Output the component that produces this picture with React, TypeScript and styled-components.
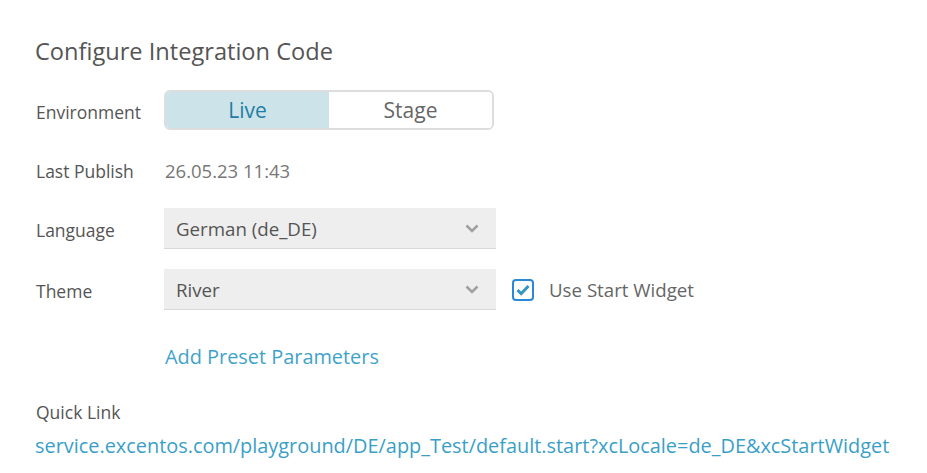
import styled, { createGlobalStyle } from "styled-components";

const GlobalStyle = createGlobalStyle`
  body {
    margin: 0;
    background: #ffffff;
    font-family: "Open Sans", "Liberation Sans", sans-serif;
  }
`;

const Panel = styled.div`
  padding: 36px 35px 0 35px;
  color: #555555;
`;

const Title = styled.h2`
  margin: 0 0 24px 0;
  font-size: 23.6px;
  font-weight: 400;
  color: #555555;
  line-height: 30px;
`;

const Form = styled.div`
  display: grid;
  grid-template-columns: 129px auto;
  row-gap: 20px;
  align-items: center;
`;

const Label = styled.div`
  font-size: 17.5px;
  color: #555555;
  padding: 3px 0 0 1px;
`;

const Toggle = styled.div`
  display: flex;
  width: 330px;
  height: 40px;
  box-sizing: border-box;
  border: 2px solid #dddddd;
  border-radius: 6px;
  overflow: hidden;
`;

const ToggleOption = styled.div<{ $active?: boolean }>`
  flex: 1;
  display: flex;
  align-items: center;
  justify-content: center;
  font-size: 21px;
  background: ${(p) => (p.$active ? "#cde3ea" : "#ffffff")};
  color: ${(p) => (p.$active ? "#1f7ea3" : "#666666")};
`;

const Value = styled.div`
  display: flex;
  align-items: center;
  height: 38px;
  box-sizing: border-box;
  padding: 3px 0 0 1px;
  font-size: 18.5px;
  color: #777777;
`;

const Row = styled.div`
  display: flex;
  align-items: center;
  gap: 16px;
`;

const Select = styled.div`
  display: flex;
  align-items: center;
  justify-content: space-between;
  width: 332px;
  height: 41px;
  box-sizing: border-box;
  padding: 0 17px 0 12px;
  background: #eeeeee;
  border-bottom: 1px solid #d8d8d8;
  font-size: 18.7px;
  color: #555555;
`;

const CheckLabel = styled.label`
  display: flex;
  align-items: center;
  gap: 15px;
  font-size: 18.7px;
  color: #666666;
`;

const CheckBox = styled.span`
  display: flex;
  align-items: center;
  justify-content: center;
  width: 22px;
  height: 22px;
  box-sizing: border-box;
  border: 2px solid #2a88d8;
  border-radius: 4px;
`;

const PresetLink = styled.a`
  grid-column: 2;
  padding-left: 1px;
  margin-top: 13px;
  font-size: 19.9px;
  color: #3fa3c9;
  text-decoration: none;
`;

const QuickLabel = styled.div`
  margin-top: 30px;
  font-size: 17.5px;
  color: #555555;
  padding-left: 1px;
`;

const QuickLink = styled.a`
  display: block;
  margin-top: 8px;
  font-size: 19.9px;
  color: #3a9fc7;
  text-decoration: none;
  white-space: nowrap;
`;

function Chevron() {
  return (
    <svg width="14" height="9" viewBox="0 0 14 9">
      <path d="M1.5 1.5 L7 7 L12.5 1.5" fill="none" stroke="#a0a0a0" strokeWidth="2.6" />
    </svg>
  );
}

function Check() {
  return (
    <svg width="14" height="12" viewBox="0 0 14 12">
      <path d="M1.5 6.2 L5.2 9.6 L12.5 2" fill="none" stroke="#3497c2" strokeWidth="3" />
    </svg>
  );
}

export default function App() {
  return (
    <>
      <GlobalStyle />
      <Panel>
        <Title>Configure Integration Code</Title>
        <Form>
          <Label>Environment</Label>
          <Toggle>
            <ToggleOption $active>Live</ToggleOption>
            <ToggleOption>Stage</ToggleOption>
          </Toggle>

          <Label>Last Publish</Label>
          <Value>26.05.23 11:43</Value>

          <Label>Language</Label>
          <Select>
            German (de_DE)
            <Chevron />
          </Select>

          <Label>Theme</Label>
          <Row>
            <Select>
              River
              <Chevron />
            </Select>
            <CheckLabel>
              <CheckBox>
                <Check />
              </CheckBox>
              Use Start Widget
            </CheckLabel>
          </Row>

          <PresetLink href="#">Add Preset Parameters</PresetLink>
        </Form>
        <QuickLabel>Quick Link</QuickLabel>
        <QuickLink href="#">
          service.excentos.com/playground/DE/app_Test/default.start?xcLocale=de_DE&amp;xcStartWidget
        </QuickLink>
      </Panel>
    </>
  );
}
